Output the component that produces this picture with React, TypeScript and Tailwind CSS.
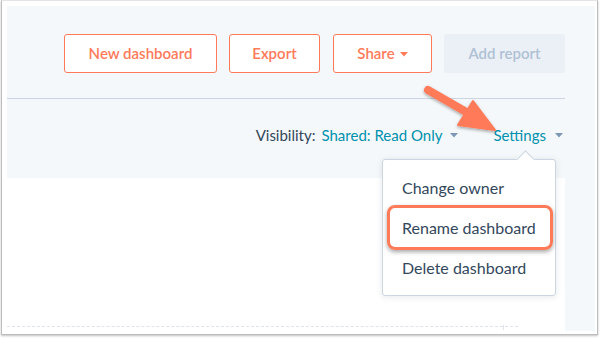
import React from 'react';

const Caret = ({ className }: { className: string }) => (
  <svg width="8" height="5" viewBox="0 0 8 5" className={className}>
    <path d="M0 0h8L4 4.5z" fill="currentColor" />
  </svg>
);

const menuItems = ["Change owner", "Rename dashboard", "Delete dashboard"];

const App = () => {
  return (
    <div className="relative w-[601px] h-[339px] bg-white overflow-hidden" style={{ fontFamily: 'Lato, "Open Sans", sans-serif' }}>
      <div className="ml-[1px] w-[597px] h-[335px] border-x border-b border-t border-[#bdbdbd] border-t-[#e4e4e4] pl-[5px] pr-[2px] pt-[5px] pb-[3px] shadow-[0_1px_2px_rgba(0,0,0,0.25)]">
        <div className="flex flex-col h-full">
          {/* header */}
          <div className="h-[172px] bg-[#f5f8fa] pt-[28px] pr-[30px]">
            <div className="flex justify-end gap-3 h-[39px]">
              <button className="w-[153px] rounded-[3px] border border-[#ff7a59] bg-white text-[15px] font-semibold text-[#ff7a59]">
                New dashboard
              </button>
              <button className="w-[91px] rounded-[3px] border border-[#ff7a59] bg-white text-[15px] font-semibold text-[#ff7a59]">
                Export
              </button>
              <button className="w-[99px] ml-px rounded-[3px] border border-[#ff7a59] bg-white text-[15px] font-semibold text-[#ff7a59] flex items-center justify-center gap-[5px]">
                Share
                <Caret className="text-[#ff7a59] mt-px" />
              </button>
              <button className="w-[121px] rounded-[3px] bg-[#eaf0f6] text-[15px] font-semibold text-[#b0c1d4]">
                Add report
              </button>
            </div>
            <div className="mt-[25px] border-t border-[#cbd6e2]" />
            <div className="flex justify-end items-center mt-[25px] text-[15px] text-[#33475b] pr-[2px]">
              <span>Visibility:</span>
              <span className="ml-[6px] text-[#0091ae]">Shared: Read Only</span>
              <Caret className="ml-[8px] text-[#7c98b6]" />
              <span className="ml-[35px] text-[#0091ae]">Settings</span>
              <Caret className="ml-[9px] text-[#7c98b6]" />
            </div>
          </div>
          {/* body */}
          <div className="flex flex-1">
            <div className="flex-1 bg-white flex flex-col justify-end pb-[4px] pr-[47px]">
              <div className="relative border-t border-dashed border-[#dfe3eb]">
                <div className="absolute right-[14px] top-[-2px] h-[5px] border-l border-[#dfe3eb]" />
              </div>
            </div>
            <div className="w-[30px] bg-[#f5f8fa]" />
          </div>
        </div>
      </div>

      {/* settings dropdown */}
      <div className="absolute left-[382px] top-[159px] w-[174px] h-[137px] rounded-[3px] border border-[#cbd6e2] bg-white shadow-[0_1px_6px_rgba(45,62,80,0.12)] pt-[8px]">
        <div className="absolute left-[136px] top-[-7px] w-[13px] h-[13px] rotate-45 bg-white border-l border-t border-[#cbd6e2]" />
        {menuItems.map(item => (
          <div key={item} className="relative h-[40px] flex items-center pl-[19px] text-[16px] text-[#33475b]">
            {item}
          </div>
        ))}
        <div className="absolute left-[4px] top-[45px] w-[166px] h-[45px] rounded-[8px] border-[3px] border-[#ff7a59] shadow-[0_2px_4px_rgba(0,0,0,0.35)]" />
      </div>

      {/* annotation arrow */}
      <svg className="absolute left-0 top-0 pointer-events-none" width="601" height="339">
        <defs>
          <filter id="sh" x="-20%" y="-20%" width="140%" height="140%">
            <feDropShadow dx="0" dy="1.5" stdDeviation="1.5" floodColor="#000" floodOpacity="0.35" />
          </filter>
        </defs>
        <g filter="url(#sh)" fill="#ff7a59">
          <line x1="428" y1="90" x2="468" y2="113" stroke="#ff7a59" strokeWidth="8" strokeLinecap="round" />
          <path d="M458 125 L473 101 L495 130 Z" strokeLinejoin="round" stroke="#ff7a59" strokeWidth="2" />
        </g>
      </svg>
    </div>
  );
};

export default App;
